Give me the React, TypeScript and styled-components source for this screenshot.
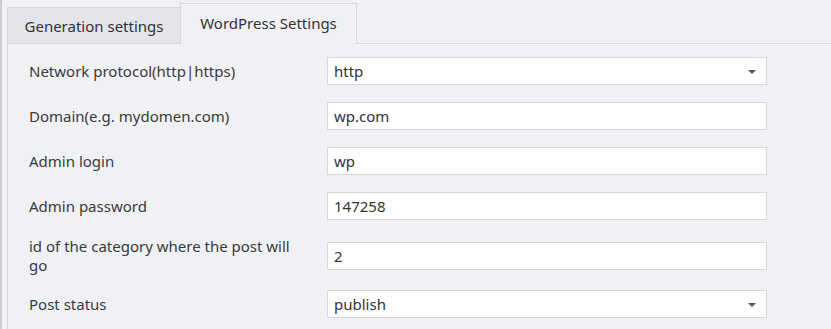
import styled, { createGlobalStyle } from 'styled-components';

const GlobalStyle = createGlobalStyle`
  html, body {
    margin: 0;
    padding: 0;
    background: #f0f1f5;
    overflow: hidden;
  }
  body {
    font-family: "Noto Sans", "Open Sans", sans-serif;
    font-size: 15px;
    color: #3a3a3a;
  }
`;

type Field = {
  label: string;
  value: string;
  select?: boolean;
  tall?: boolean;
};

const fields: Field[] = [
  { label: 'Network protocol(http|https)', value: 'http', select: true },
  { label: 'Domain(e.g. mydomen.com)', value: 'wp.com' },
  { label: 'Admin login', value: 'wp' },
  { label: 'Admin password', value: '147258' },
  { label: 'id of the category where the post will go', value: '2', tall: true },
  { label: 'Post status', value: 'publish', select: true },
];

export default function App() {
  return (
    <>
      <GlobalStyle />
      <SRoot>
        <STabStrip>
          <STab>Generation settings</STab>
          <STab $active>WordPress Settings</STab>
        </STabStrip>
        <SPanel>
          <SForm>
            {fields.map((f) => (
              <SRow key={f.label} $tall={f.tall}>
                <SLabel>{f.label}</SLabel>
                <SInput>
                  <span>{f.value}</span>
                  {f.select && <SArrow />}
                </SInput>
              </SRow>
            ))}
          </SForm>
        </SPanel>
      </SRoot>
    </>
  );
}

const SRoot = styled.div`
  display: flex;
  flex-direction: column;
  height: 329px;
  border-left: 2px solid #cdced3;
  padding-left: 5px;
  box-sizing: border-box;
`;

const STabStrip = styled.div`
  display: flex;
  align-items: flex-end;
  height: 43px;
  flex-shrink: 0;
`;

const STab = styled.div<{ $active?: boolean }>`
  box-sizing: border-box;
  height: ${(p) => (p.$active ? '41px' : '37px')};
  width: ${(p) => (p.$active ? '177px' : '173px')};
  margin-bottom: -1px;
  position: relative;
  z-index: ${(p) => (p.$active ? 2 : 1)};
  display: flex;
  align-items: center;
  justify-content: center;
  padding-bottom: ${(p) => (p.$active ? '2px' : '0')};
  border: 1px solid #d5d7dd;
  border-bottom: ${(p) => (p.$active ? 'none' : '1px solid #d5d7dd')};
  border-right: ${(p) => (p.$active ? '1px solid #d5d7dd' : 'none')};
  background: ${(p) => (p.$active ? '#f0f1f5' : '#e4e5ea')};
  color: #333;
  white-space: nowrap;
`;

const SPanel = styled.div`
  flex: 1;
  border-top: 1px solid #d5d7dd;
  border-left: 1px solid #d5d7dd;
  padding: 13px 0 0 21px;
`;

const SForm = styled.div`
  display: flex;
  flex-direction: column;
  gap: 17px;
`;

const SRow = styled.div<{ $tall?: boolean }>`
  display: grid;
  grid-template-columns: 298px 440px;
  align-items: center;
  height: ${(p) => (p.$tall ? '36px' : '28px')};
`;

const SLabel = styled.div`
  max-width: 270px;
  line-height: 19px;
  color: #3a3a3a;
`;

const SInput = styled.div`
  box-sizing: border-box;
  height: 28px;
  display: flex;
  align-items: center;
  justify-content: space-between;
  padding: 0 10px 0 6px;
  background: #fff;
  border: 1px solid #d6d8de;
  color: #333;
`;

const SArrow = styled.span`
  width: 0;
  height: 0;
  border-left: 4px solid transparent;
  border-right: 4px solid transparent;
  border-top: 4px solid #555;
  margin-top: 2px;
`;
